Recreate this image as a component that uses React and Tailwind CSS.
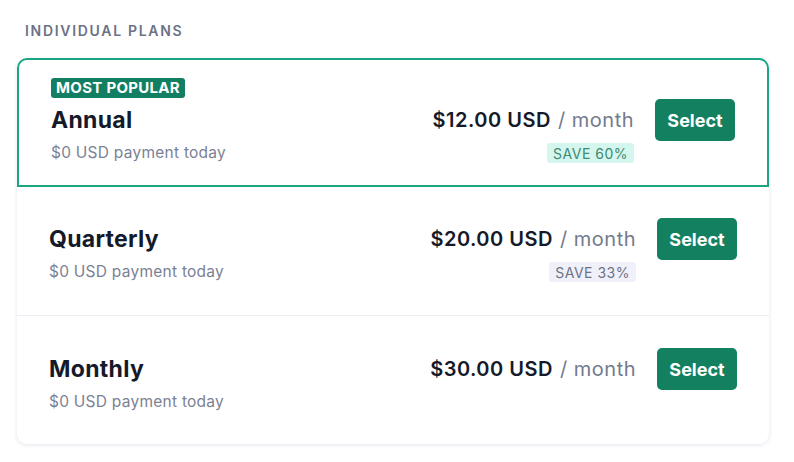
const plans = [
  { name: 'Annual', price: '$12.00', save: 'SAVE 60%', popular: true },
  { name: 'Quarterly', price: '$20.00', save: 'SAVE 33%' },
  { name: 'Monthly', price: '$30.00' },
];

const PlanRow = ({ plan }) => {
  return (
    <div className="flex items-start justify-between">
      <div className="flex flex-col">
        <div className="h-[42px] flex items-center text-[23px] font-bold tracking-[0.3px] text-[#141a29]">{plan.name}</div>
        <div className="h-[21px] mt-px flex items-center text-[15.5px] tracking-[0.25px] text-[#7b8194]">$0 USD payment today</div>
      </div>
      <div className="flex items-start gap-[21px]">
        <div className="flex flex-col items-end">
          <div className="h-[42px] flex items-center text-[20px] tracking-[0.5px]">
            <span className="font-semibold text-[#141a29]">{plan.price} USD</span>
            <span className="ml-[7px] text-[#737a8d]">/ month</span>
          </div>
          {plan.save && (
            <span
              className={
                plan.popular
                  ? 'mt-[2px] h-[20px] flex items-center px-[6px] rounded-[3px] text-[14px] tracking-[0.5px] bg-[#d5f6ef] text-[#3d8a72]'
                  : 'mt-[2px] h-[20px] flex items-center px-[6px] rounded-[3px] text-[14px] tracking-[0.5px] bg-[#eff0fa] text-[#6d7385]'
              }
            >
              {plan.save}
            </span>
          )}
        </div>
        <button className="w-[80px] h-[42px] rounded-[5px] bg-[#13805f] text-white text-[18px] font-bold">
          Select
        </button>
      </div>
    </div>
  );
};

const App = () => {
  return (
    <div className="w-[794px] h-[462px] bg-white px-[17px] pt-[22px]" style={{ fontFamily: 'Inter, "Noto Sans", sans-serif' }}>
      <h2 className="ml-2 text-[14px] font-semibold tracking-[1.7px] text-[#6b7286] leading-[18px]">INDIVIDUAL PLANS</h2>

      {/* Plans card */}
      <div className="mt-[18px] w-[752px] rounded-[10px] bg-white shadow-[0_1px_4px_rgba(60,70,120,0.14)]">
        <div className="rounded-t-[10px] border-2 border-[#1ba583] px-8 pt-[18px] pb-[22px]">
          <div className="flex">
            <span className="h-[20px] flex items-center px-[5px] rounded-[3px] bg-[#137f62] text-white text-[15px] font-bold tracking-[0.3px]">
              MOST POPULAR
            </span>
          </div>
          <div className="mt-px">
            <PlanRow plan={plans[0]} />
          </div>
        </div>
        <div className="px-8 pt-[31px] pb-[33px] border-b border-[#eceef5]">
          <PlanRow plan={plans[1]} />
        </div>
        <div className="px-8 pt-8 pb-[32px]">
          <PlanRow plan={plans[2]} />
        </div>
      </div>
    </div>
  );
};

export default App;
